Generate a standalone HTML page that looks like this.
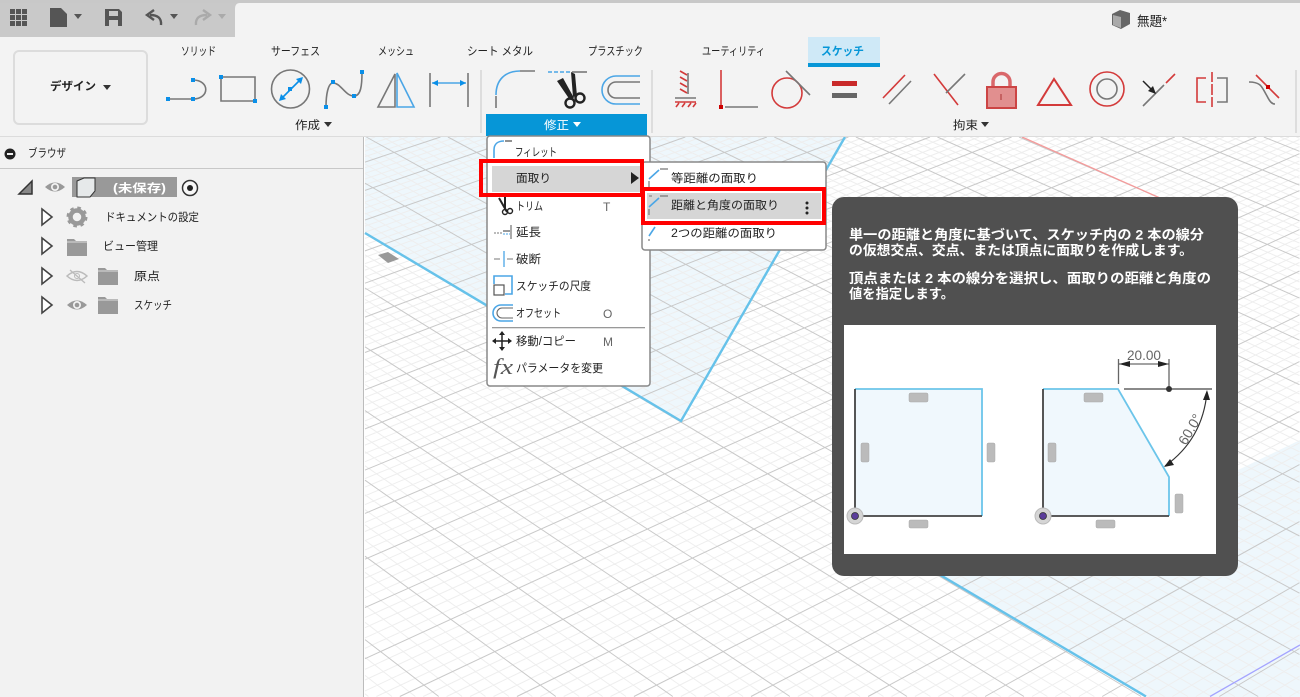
<!DOCTYPE html>
<html lang="ja"><head><meta charset="utf-8"><title>無題</title>
<style>
html,body{margin:0;padding:0;background:#fff;width:1300px;height:697px;overflow:hidden}
svg{display:block;position:absolute;left:0;top:0;filter:blur(.35px)}
text{font-family:"Liberation Sans","Noto Sans CJK JP",sans-serif;font-size:11.5px;fill:#222;white-space:pre}
.b{font-weight:700}
.tt{fill:#fff;font-size:13.5px;font-weight:700}
.g{fill:none;stroke:#777;stroke-width:1.6}
.r{fill:none;stroke:#d33a3a;stroke-width:1.6}
.bl{fill:none;stroke:#4ba6e6;stroke-width:1.6}
.sq{fill:#0a8fe8}
.dk{fill:none;stroke:#444;stroke-width:1.8}
.sk{fill:none;stroke:#6cc5ea;stroke-width:1.8}
.cl{fill:#bbb;stroke:#aaa;stroke-width:.5}
</style></head><body>
<svg id="s" width="1300" height="697" viewBox="0 0 1300 697" xmlns="http://www.w3.org/2000/svg">
<defs>
<g id="fold"><path d="M0 1h7l2 2h11v15H0z" fill="#999"/><path d="M0 4h20" stroke="#f2f2f2" stroke-width=".8"/></g>
<g id="tri"><path d="M0 0L10 8L0 16z" fill="#fff" stroke="#444" stroke-width="1.6"/></g>
<g id="eye"><path d="M0 0Q10-9 20 0Q10 9 0 0z" fill="#999"/><circle r="4" cx="10" fill="#f2f2f2"/><circle r="2.3" cx="10" fill="#999"/></g>
</defs>

<!-- viewport -->
<rect width="1300" height="697" fill="#fff"/>
<polygon points="365,137 845,137 681,421 365,233" fill="#eef7fc"/>
<polygon points="900,550 1147,697 1300,697 1300,440 1238,470 1238,550" fill="#eef7fc"/>
<path id="minor" fill="none" stroke="#eeeeee" stroke-width="1"/>
<path id="major" fill="none" stroke="#c9c9c9" stroke-width="1"/>
<path d="M1022 137L1160 198" stroke="#f59a9a" stroke-width="1.3"/>
<path d="M1210 696.500L1300 645" stroke="#a4a4ff" stroke-width="1.3"/>
<path d="M845 137L681 421L365 233" fill="none" stroke="#66c2ea" stroke-width="2.400"/>
<path d="M920 563L1146 696.500" fill="none" stroke="#66c2ea" stroke-width="2.400"/>
<path d="M378 255L388 252L399 259L388 263z" fill="#999"/>

<!-- top bar -->
<rect width="1300" height="137" fill="#f3f3f3"/>
<rect width="1300" height="3" fill="#c8c8c8"/>
<path d="M0 3H240Q235 3 235 9V37H0z" fill="#c9c9c9"/>
<rect x="0" y="136" width="1300" height="1" fill="#dcdcdc"/>
<g fill="#555">
<rect x="10" y="9" width="5" height="5"/><rect x="16" y="9" width="5" height="5"/><rect x="22" y="9" width="5" height="5"/>
<rect x="10" y="15" width="5" height="5"/><rect x="16" y="15" width="5" height="5"/><rect x="22" y="15" width="5" height="5"/>
<rect x="10" y="21" width="5" height="5"/><rect x="16" y="21" width="5" height="5"/><rect x="22" y="21" width="5" height="5"/>
<path d="M50 8H61L67 14V27H50z"/><path d="M74 14H82L78 19z"/>
<path d="M105 9H119L122 12V26H105zM109 11V16H118V11zM109 20V26H118V20z" fill-rule="evenodd"/>
<path d="M170 14H178L174 19z"/>
</g>
<path d="M161 25Q162 15 150 15M154 10L147 15L154 20" fill="none" stroke="#555" stroke-width="2.4"/>
<path d="M196 25Q195 15 207 15M203 10L210 15L203 20" fill="none" stroke="#aaa" stroke-width="2.4"/>
<path d="M218 14H226L222 19z" fill="#aaa"/>

<path d="M1112 14L1120 10L1130 13V24L1121 29L1112 25z" fill="#666"/><path d="M1113 15L1121 17V28L1113 25z" fill="#aaa"/>
<text x="1137" y="26" textLength="30" lengthAdjust="spacingAndGlyphs" style="font-size:13.5px">無題*</text>

<!-- tabs -->
<text x="181" y="55" textLength="35" lengthAdjust="spacingAndGlyphs">ソリッド</text>
<text x="271" y="55" textLength="49" lengthAdjust="spacingAndGlyphs">サーフェス</text>
<text x="378" y="55" textLength="36" lengthAdjust="spacingAndGlyphs">メッシュ</text>
<text x="467" y="55" textLength="66" lengthAdjust="spacingAndGlyphs">シート メタル</text>
<text x="588" y="55" textLength="55" lengthAdjust="spacingAndGlyphs">プラスチック</text>
<text x="702" y="55" textLength="63" lengthAdjust="spacingAndGlyphs">ユーティリティ</text>
<rect x="808" y="37" width="72" height="30" fill="#cfe9f7"/>
<rect x="808" y="63" width="72" height="4" fill="#0696d7"/>
<text x="821" y="55" textLength="43" lengthAdjust="spacingAndGlyphs" class="b" style="fill:#0696d7">スケッチ</text>

<rect x="14" y="51" width="133" height="73" rx="5" fill="#f3f3f3" stroke="#dcdcdc" stroke-width="2"/>
<text x="50" y="90" textLength="46" lengthAdjust="spacingAndGlyphs" class="b" style="fill:#222">デザイン</text>
<path d="M103 85H111L107 90z" fill="#333"/>

<!-- create icons -->
<path class="g" d="M168 99H193C210 99 210 80 193 80"/>
<rect class="sq" x="166" y="97" width="4" height="4"/><rect class="sq" x="191" y="97" width="4" height="4"/><rect class="sq" x="191" y="78" width="4" height="4"/>
<path class="g" d="M221 77H255V101H221z"/>
<rect class="sq" x="219" y="75" width="4" height="4"/><rect class="sq" x="253" y="99" width="4" height="4"/>
<circle class="g" cx="290.500" cy="89" r="19"/>
<path class="bl" d="M281 99L301 79" style="stroke:#0a8fe8"/><path class="sq" d="M279 101L281 94L286 99zM303 77L301 84L296 79z"/><rect class="sq" x="288" y="87" width="4" height="4"/>
<path class="g" d="M326 107C326 95 328 83 333 83C341 83 345 96 354 96C361 96 362 85 362 72"/>
<rect class="sq" x="324" y="105" width="4" height="4"/><rect class="sq" x="331" y="80" width="4" height="4"/><rect class="sq" x="352" y="94" width="4" height="4"/><rect class="sq" x="360" y="70" width="4" height="4"/>
<path class="g" d="M395 74V107H378z"/><path class="bl" d="M397 73L414 107H397z"/>
<path class="g" d="M430 73V107M468 73V107"/><path class="bl" d="M432 83H466"/><path class="sq" d="M432 83L438 80V86zM466 83L460 80V86z"/>
<text x="295" y="129" textLength="25" lengthAdjust="spacingAndGlyphs">作成</text><path d="M324 122H332L328 127z" fill="#333"/>

<!-- separators -->
<path d="M481 70V133M652 70V133M1296 70V133" stroke="#ddd" stroke-width="2"/>

<!-- modify -->
<path class="g" d="M496 108V96M520 71H535"/><path class="bl" d="M496 95C496 80 505 71 520 71"/>
<path class="bl" d="M548 72H570" stroke-dasharray="4 2"/><path class="g" d="M572 72H587"/>
<path d="M557 81L563 78L574 98L570 100zM571 72L575 74L577 96L573 97z" fill="#222"/>
<circle cx="570" cy="103" r="4.500" fill="none" stroke="#222" stroke-width="2.400"/><circle cx="580" cy="98" r="4.500" fill="none" stroke="#222" stroke-width="2.400"/>
<path class="bl" d="M640 76H616A14 14 0 0 0 616 104H640"/><path class="g" d="M640 82H616A8 8 0 0 0 616 98H640"/>
<rect x="486" y="114" width="161" height="22" fill="#0696d7"/>
<text x="544" y="129" textLength="25" lengthAdjust="spacingAndGlyphs" style="fill:#fff">修正</text><path d="M573 122H581L577 127z" fill="#fff"/>

<!-- constraints -->
<path class="g" d="M688 73V94M675 98H696"/><path class="r" d="M687 75L680 71M687 81L680 77M687 87L680 83M687 93L680 89M675 102H696M679 103L676 107M685 103L682 107M691 103L688 107M696 103L693 107"/>
<path class="r" d="M721 70V106"/><rect x="719" y="105" width="4" height="4" fill="#c00"/><path class="g" d="M725 107H758"/>
<circle class="r" cx="787" cy="93" r="15"/><path class="g" d="M786 71L810 95"/>
<rect x="832" y="81" width="25" height="5" fill="#c92a2a"/><rect x="832" y="93" width="25" height="5" fill="#666"/>
<path class="r" d="M883 98L905 75"/><path class="g" d="M889 104L911 81"/>
<path class="r" d="M934 74L958 105"/><path class="g" d="M946 93L965 74"/>
<path d="M993 88V82A8.500 8.500 0 0 1 1010 82V88" fill="none" stroke="#d9676a" stroke-width="3.500"/><rect x="987" y="87" width="29" height="21" fill="#e18f8f" stroke="#cc4444" stroke-width="2"/><path d="M1001 94V100" stroke="#a33" stroke-width="1"/>
<path d="M1054 79L1038 105H1071z" fill="none" stroke="#d33a3a" stroke-width="2"/>
<circle class="r" cx="1107" cy="89" r="17"/><circle class="g" cx="1107" cy="89" r="10"/>
<path class="g" d="M1143 106L1164 85"/><path class="r" d="M1166 83L1175 74"/><path d="M1143 81L1152 90" stroke="#222" stroke-width="1.500"/><path d="M1156 94L1148 91L1153 86z" fill="#222"/>
<path class="r" d="M1206 78H1197V102H1206M1212 72V107" /><path class="g" d="M1217 78H1227V102H1217"/><path d="M1212 82V84M1212 95V97" stroke="#f3f3f3" stroke-width="2"/>
<path class="r" d="M1256 75L1279 98"/><path class="g" d="M1249 82C1262 82 1262 88 1267 96C1270 102 1272 104 1275 104"/><rect x="1266" y="85" width="4" height="4" fill="#c00"/>
<text x="953" y="129" textLength="25" lengthAdjust="spacingAndGlyphs">拘束</text><path d="M981 122H989L985 127z" fill="#333"/>

<!-- browser -->
<rect x="0" y="137" width="364" height="560" fill="#f2f2f2"/>
<rect x="363" y="137" width="1" height="560" fill="#bcbcbc"/>
<rect x="0" y="168" width="363" height="1" fill="#c8c8c8"/>
<circle cx="10" cy="154" r="5.500" fill="#222"/><rect x="7" y="153" width="6" height="2" fill="#f2f2f2"/>
<text x="28" y="157" textLength="38" lengthAdjust="spacingAndGlyphs">ブラウザ</text>
<path d="M19 194L32 181V194z" fill="#888" stroke="#333" stroke-width="1.500"/>
<use href="#eye" x="45" y="187"/>
<rect x="72" y="177" width="105" height="20" fill="#999"/>
<path d="M77 181L84 178H95V191L90 197H77z" fill="#e6e9ea" stroke="#333" stroke-width="1"/>
<text x="113" y="192" textLength="53" lengthAdjust="spacingAndGlyphs" class="b" style="fill:#fff">(未保存)</text>
<circle cx="190" cy="188" r="7.500" fill="#f8f8f8" stroke="#333" stroke-width="1.500"/><circle cx="190" cy="188" r="3" fill="#222"/>
<use href="#tri" x="42" y="209"/><use href="#tri" x="42" y="238"/><use href="#tri" x="42" y="268"/><use href="#tri" x="42" y="297"/>
<circle cx="77" cy="217" r="6.500" fill="none" stroke="#999" stroke-width="4.500"/><circle cx="77" cy="217" r="9" fill="none" stroke="#999" stroke-width="3" stroke-dasharray="3.500 3.570"/>
<text x="105" y="221" textLength="94" lengthAdjust="spacingAndGlyphs">ドキュメントの設定</text>
<use href="#fold" x="67" y="238"/>
<text x="103" y="250" textLength="55" lengthAdjust="spacingAndGlyphs">ビュー管理</text>
<path d="M67 276Q77 267 87 276Q77 285 67 276z" fill="none" stroke="#bbb" stroke-width="1.500"/><circle cx="77" cy="276" r="2.500" fill="none" stroke="#bbb"/><path d="M70 270L85 283" stroke="#bbb" stroke-width="1.300"/>
<use href="#fold" x="98" y="267"/>
<text x="134" y="280" textLength="26" lengthAdjust="spacingAndGlyphs">原点</text>
<use href="#eye" x="67" y="305"/>
<use href="#fold" x="98" y="296"/>
<text x="134" y="309" textLength="38" lengthAdjust="spacingAndGlyphs">スケッチ</text>

<!-- main menu -->
<rect x="487" y="136" width="163" height="250" rx="3" fill="#fff" stroke="#888" stroke-width="1.500"/>
<rect x="492" y="166" width="148" height="26" fill="#d6d6d6"/>
<path class="bl" d="M494 158V150C494 144 498 141 504 141" /><path class="g" d="M505 141H512" stroke-width="1.200"/>
<text x="515" y="156" textLength="42" lengthAdjust="spacingAndGlyphs">フィレット</text>
<text x="516" y="182" textLength="35" lengthAdjust="spacingAndGlyphs">面取り</text>
<path d="M631 172L639 178L631 184z" fill="#222"/>
<path d="M499 198L507 212M505 197V208" stroke="#222" stroke-width="2"/><circle cx="505" cy="212" r="2.500" fill="none" stroke="#222" stroke-width="1.400"/><circle cx="510" cy="211" r="2.500" fill="none" stroke="#222" stroke-width="1.400"/>
<text x="516" y="210" textLength="27" lengthAdjust="spacingAndGlyphs">トリム</text>
<text x="603" y="211" style="font-size:12px;fill:#666" textLength="8">T</text>
<path d="M494 233H502" stroke="#777" stroke-dasharray="2 1"/><path d="M503 231H510" stroke="#333" stroke-width="1"/><path d="M503 234H510" stroke="#4ba6e6" stroke-width="1" stroke-dasharray="2 1"/><path d="M511 225V239" stroke="#555"/>
<text x="516" y="236" textLength="25" lengthAdjust="spacingAndGlyphs">延長</text>
<path d="M494 259H500M507 259H513" stroke="#777"/><path d="M504 251V267" stroke="#4ba6e6" stroke-width="1.300"/>
<text x="516" y="263" textLength="25" lengthAdjust="spacingAndGlyphs">破断</text>
<path class="bl" d="M494 284V276H512V294H505" stroke-width="1.300"/><rect x="494" y="285" width="10" height="10" fill="none" stroke="#555" stroke-width="1.200"/>
<text x="516" y="290" textLength="75" lengthAdjust="spacingAndGlyphs">スケッチの尺度</text>
<path class="bl" d="M513 305H501A8 8 0 0 0 501 321H513" stroke-width="1.400"/><path d="M513 308H502A5 5 0 0 0 502 318H513" fill="none" stroke="#666" stroke-width="1.100"/>
<text x="516" y="317" textLength="45" lengthAdjust="spacingAndGlyphs">オフセット</text>
<text x="603" y="318" style="font-size:12px;fill:#666" textLength="9">O</text>
<rect x="492" y="327" width="153" height="1.300" fill="#999"/>
<path d="M502 333V349M494 341H510" stroke="#222" stroke-width="1.500"/><path d="M502 331L499 335H505zM502 351L499 347H505zM492 341L496 338V344zM512 341L508 338V344z" fill="#222"/>
<text x="516" y="345" textLength="60" lengthAdjust="spacingAndGlyphs">移動/コピー</text>
<text x="603" y="346" style="font-size:12px;fill:#666" textLength="9">M</text>
<text x="493" y="374" style="font-family:'Liberation Serif',serif;font-style:italic;font-size:22px;fill:#555" textLength="20" lengthAdjust="spacingAndGlyphs">fx</text>
<text x="516" y="372" textLength="87" lengthAdjust="spacingAndGlyphs">パラメータを変更</text>

<!-- submenu -->
<rect x="642" y="162" width="184" height="88" rx="3" fill="#fff" stroke="#888" stroke-width="1.500"/>
<rect x="647" y="193" width="174" height="26" fill="#d6d6d6"/>
<path class="bl" d="M649 179L659 170" stroke-width="1.300"/><path d="M660 169H668M649 181V187" stroke="#777" stroke-width="1.200"/>
<path class="bl" d="M649 207L659 198" stroke-width="1.300"/><path d="M660 196H668M649 209V215" stroke="#777" stroke-width="1.200" fill="none"/><path d="M649 196H652" stroke="#777"/>
<path class="bl" d="M649 236L655 227" stroke-width="1.300"/><path d="M649 239V241" stroke="#777" stroke-width="1.200"/>
<text x="671" y="182" textLength="87" lengthAdjust="spacingAndGlyphs">等距離の面取り</text>
<text x="671" y="209" textLength="108" lengthAdjust="spacingAndGlyphs">距離と角度の面取り</text>
<text x="671" y="237" textLength="106" lengthAdjust="spacingAndGlyphs">2つの距離の面取り</text>
<circle cx="807" cy="203" r="1.500" fill="#222"/><circle cx="807" cy="208" r="1.500" fill="#222"/><circle cx="807" cy="213" r="1.500" fill="#222"/>

<!-- red rects -->
<rect x="481" y="161" width="161" height="34" fill="none" stroke="#f00" stroke-width="4"/>
<rect x="643" y="189" width="181" height="34" fill="none" stroke="#f00" stroke-width="4"/>

<!-- tooltip -->
<rect x="832" y="197" width="406" height="379" rx="12" fill="#505050"/>
<text class="tt" x="849" y="239.500" textLength="355" lengthAdjust="spacingAndGlyphs">単一の距離と角度に基づいて、スケッチ内の 2 本の線分</text>
<text class="tt" x="849" y="255" textLength="344" lengthAdjust="spacingAndGlyphs">の仮想交点、交点、または頂点に面取りを作成します。</text>
<text class="tt" x="849" y="283" textLength="362" lengthAdjust="spacingAndGlyphs">頂点または 2 本の線分を選択し、面取りの距離と角度の</text>
<text class="tt" x="849" y="298.500" textLength="105" lengthAdjust="spacingAndGlyphs">値を指定します。</text>
<rect x="844" y="325" width="372" height="229" fill="#fff"/>

<!-- left diagram -->
<rect x="855" y="389" width="127" height="127" fill="#f0f8fd"/>
<path class="sk" d="M855 389H982V516"/><path class="dk" d="M855 389V516H982"/>
<rect class="cl" x="909" y="393" width="19" height="9" rx="1.500"/><rect class="cl" x="909" y="520" width="19" height="8" rx="1.500"/><rect class="cl" x="861" y="443" width="8" height="19" rx="1.500"/><rect class="cl" x="987" y="443" width="8" height="19" rx="1.500"/>
<circle cx="855" cy="516" r="8" fill="#d5d5d5" stroke="#bbb"/><circle cx="855" cy="516" r="3.500" fill="#5b3d9a" stroke="#333" stroke-width=".8"/>

<!-- right diagram -->
<path d="M1043 389H1118L1169 477V516H1043z" fill="#f0f8fd"/>
<path class="sk" d="M1043 389H1118L1169 477V516"/><path class="dk" d="M1043 389V516H1169"/>
<rect class="cl" x="1084" y="393" width="19" height="9" rx="1.500"/><rect class="cl" x="1096" y="520" width="19" height="8" rx="1.500"/><rect class="cl" x="1048" y="443" width="8" height="19" rx="1.500"/><rect class="cl" x="1175" y="494" width="8" height="19" rx="1.500"/>
<circle cx="1043" cy="516" r="8" fill="#d5d5d5" stroke="#bbb"/><circle cx="1043" cy="516" r="3.500" fill="#5b3d9a" stroke="#333" stroke-width=".8"/>
<path d="M1118.500 359V384M1169 359V389" stroke="#666" stroke-width="1.300"/>
<path d="M1119 364H1169" stroke="#444" stroke-width="1"/><path d="M1119 364L1130 361V367zM1169 364L1158 361V367z" fill="#222"/>
<text x="1127" y="360" textLength="34" lengthAdjust="spacingAndGlyphs" style="font-size:14px;fill:#666">20.00</text>
<path d="M1124 389H1212" stroke="#444" stroke-width="1.300"/><circle cx="1169" cy="389" r="3" fill="#333"/>
<path d="M1207 392C1204 425 1189 449 1165 466" fill="none" stroke="#333" stroke-width="1.200"/>
<path d="M1207 390L1203 400H1210zM1164 467L1174 465L1170 459z" fill="#222"/>
<text transform="translate(1186 446) rotate(-60)" x="0" y="0" style="font-size:14px;fill:#666">60.0°</text>
</svg>
<script>
(function(){
var D=6.361e-4,k=1.013e-5,Yh=-1150,al=0.243,f=0.0634,g=0.0198;
var X0=365,X1=1299.5,Y0=137,Y1=696.5;
function P(a,b){var c=b-a,w=D-k*c;return [(al+f*a+g*c)/w,Yh+1/w];}
function seg(p,q){
  var dx=q[0]-p[0],dy=q[1]-p[1],t0=0,t1=1;
  var ck=[[-dx,p[0]-X0],[dx,X1-p[0]],[-dy,p[1]-Y0],[dy,Y1-p[1]]];
  for(var n=0;n<4;n++){
    var u=ck[n][0],v=ck[n][1];
    if(u===0){if(v<0)return '';continue;}
    var r=v/u;
    if(u<0){if(r>t1)return '';if(r>t0)t0=r;}
    else{if(r<t0)return '';if(r<t1)t1=r;}
  }
  return 'M'+(p[0]+t0*dx).toFixed(1)+' '+(p[1]+t0*dy).toFixed(1)+'L'+(p[0]+t1*dx).toFixed(1)+' '+(p[1]+t1*dy).toFixed(1);
}
var mj='',mn='',A0=-12,A1=32,B0=-22,B1=26;
for(var i=A0*5;i<=A1*5;i++){var a=i/5,s=seg(P(a,B0),P(a,B1));if(i%5==0)mj+=s;else mn+=s;}
for(var j=B0*5;j<=B1*5;j++){var b=j/5,t=seg(P(A0,b),P(A1,b));if(j%5==0)mj+=t;else mn+=t;}
document.getElementById('major').setAttribute('d',mj);
document.getElementById('minor').setAttribute('d',mn);
})();
</script>
</body></html>
